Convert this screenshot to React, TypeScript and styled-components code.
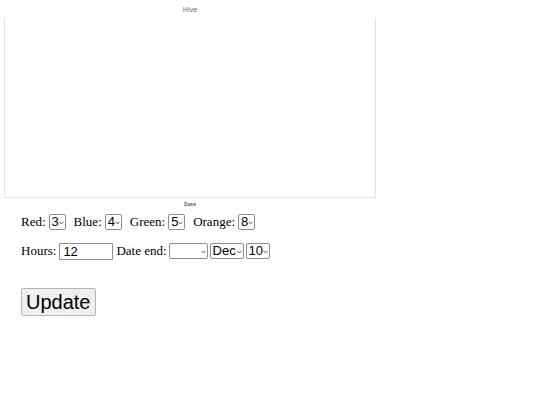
import React from "react";
import styled, { createGlobalStyle } from "styled-components";

const Global = createGlobalStyle`
  html, body { margin: 0; padding: 0; background: #fff; }
  body { font-family: "Liberation Serif", "Times New Roman", serif; color: #000; }
`;

const Page = styled.div`
  display: flex;
  flex-direction: column;
  padding: 0 0 0 4px;
`;

const ChartFrame = styled.div`
  width: 372px;
  display: flex;
  flex-direction: column;
  align-items: center;
`;

const ChartTitle = styled.div`
  height: 18px;
  line-height: 20px;
  font-family: "Open Sans", "Liberation Sans", sans-serif;
  font-size: 7px;
  color: #4f5964;
`;

const PlotArea = styled.div`
  align-self: stretch;
  height: 179px;
  border: 1px solid #e4e4e4;
  border-top: none;
`;

const AxisTitle = styled.div`
  height: 12px;
  line-height: 12px;
  font-family: "Open Sans", "Liberation Sans", sans-serif;
  font-size: 5px;
  font-weight: 700;
  color: #3b5f93;
`;

const Form = styled.form`
  display: flex;
  flex-direction: column;
  align-items: flex-start;
  padding-left: 17px;
`;

const Row = styled.div<{ $gap: number; $top: number }>`
  display: flex;
  align-items: center;
  gap: ${(p) => p.$gap}px;
  height: 18px;
  margin-top: ${(p) => p.$top}px;
`;

const Field = styled.label<{ $gap?: number }>`
  display: inline-flex;
  align-items: center;
  gap: ${(p) => p.$gap ?? 3}px;
  font-size: 13px;
`;

const Controls = styled.span`
  display: inline-flex;
  gap: 2px;
`;

const SelectBox = styled.span<{ $w: number }>`
  display: inline-flex;
  align-items: center;
  box-sizing: border-box;
  width: ${(p) => p.$w}px;
  height: 16px;
  border: 1px solid #8d8d8d;
  border-radius: 2px;
  padding: 0 0 0 2px;
  background: #fff;
`;

const NativeSelect = styled.select`
  appearance: none;
  -webkit-appearance: none;
  flex: 1;
  min-width: 0;
  border: none;
  background: transparent;
  padding: 0;
  margin: 0;
  font-family: "Liberation Sans", Arial, sans-serif;
  font-size: 13px;
  line-height: 14px;
  color: #000;
  outline: none;
`;

const Chevron = styled.svg`
  flex: none;
  width: 5px;
  height: 4px;
  margin: 2px 1px 0 0;
`;

const TextInput = styled.input`
  box-sizing: border-box;
  width: 54px;
  height: 17px;
  border: 1px solid #8d8d8d;
  border-radius: 1px;
  padding: 0 3px;
  font-family: "Liberation Sans", Arial, sans-serif;
  font-size: 13px;
  color: #000;
  outline: none;
`;

const UpdateButton = styled.button`
  margin-top: 28px;
  box-sizing: border-box;
  height: 28px;
  padding: 0 4px;
  border: 1px solid #b5b5b5;
  border-radius: 2px;
  background: #efefef;
  font-family: "Liberation Sans", Arial, sans-serif;
  font-size: 20px;
  line-height: 24px;
  color: #000;
`;

type DropProps = { width: number; value: string; options: string[] };

const Drop = ({ width, value, options }: DropProps) => (
  <SelectBox $w={width}>
    <NativeSelect defaultValue={value}>
      {options.map((o) => (
        <option key={o} value={o}>
          {o}
        </option>
      ))}
    </NativeSelect>
    <Chevron viewBox="0 0 5 4">
      <polyline points="0.6,0.8 2.5,2.9 4.4,0.8" fill="none" stroke="#444" strokeWidth="0.9" />
    </Chevron>
  </SelectBox>
);

const counts = ["1", "2", "3", "4", "5", "6", "7", "8", "9"];
const months = ["Jan", "Feb", "Mar", "Apr", "May", "Jun", "Jul", "Aug", "Sep", "Oct", "Nov", "Dec"];
const days = Array.from({ length: 31 }, (_, i) => String(i + 1));
const years = ["", "2019", "2020", "2021", "2022"];

const colours: [string, string][] = [
  ["Red", "3"],
  ["Blue", "4"],
  ["Green", "5"],
  ["Orange", "8"],
];

export default function App() {
  return (
    <>
      <Global />
      <Page>
        <ChartFrame>
          <ChartTitle>Hive</ChartTitle>
          <PlotArea />
          <AxisTitle>Date</AxisTitle>
        </ChartFrame>
        <Form onSubmit={(e) => e.preventDefault()}>
          <Row $gap={8} $top={3}>
            {colours.map(([name, v]) => (
              <Field key={name}>
                {name}:
                <Drop width={17} value={v} options={counts} />
              </Field>
            ))}
          </Row>
          <Row $gap={3} $top={11}>
            <Field>
              Hours:
              <TextInput defaultValue="12" />
            </Field>
            <Field $gap={2}>
              Date end:
              <Controls>
                <Drop width={39} value="" options={years} />
                <Drop width={34} value="Dec" options={months} />
                <Drop width={24} value="10" options={days} />
              </Controls>
            </Field>
          </Row>
          <UpdateButton type="submit">Update</UpdateButton>
        </Form>
      </Page>
    </>
  );
}
